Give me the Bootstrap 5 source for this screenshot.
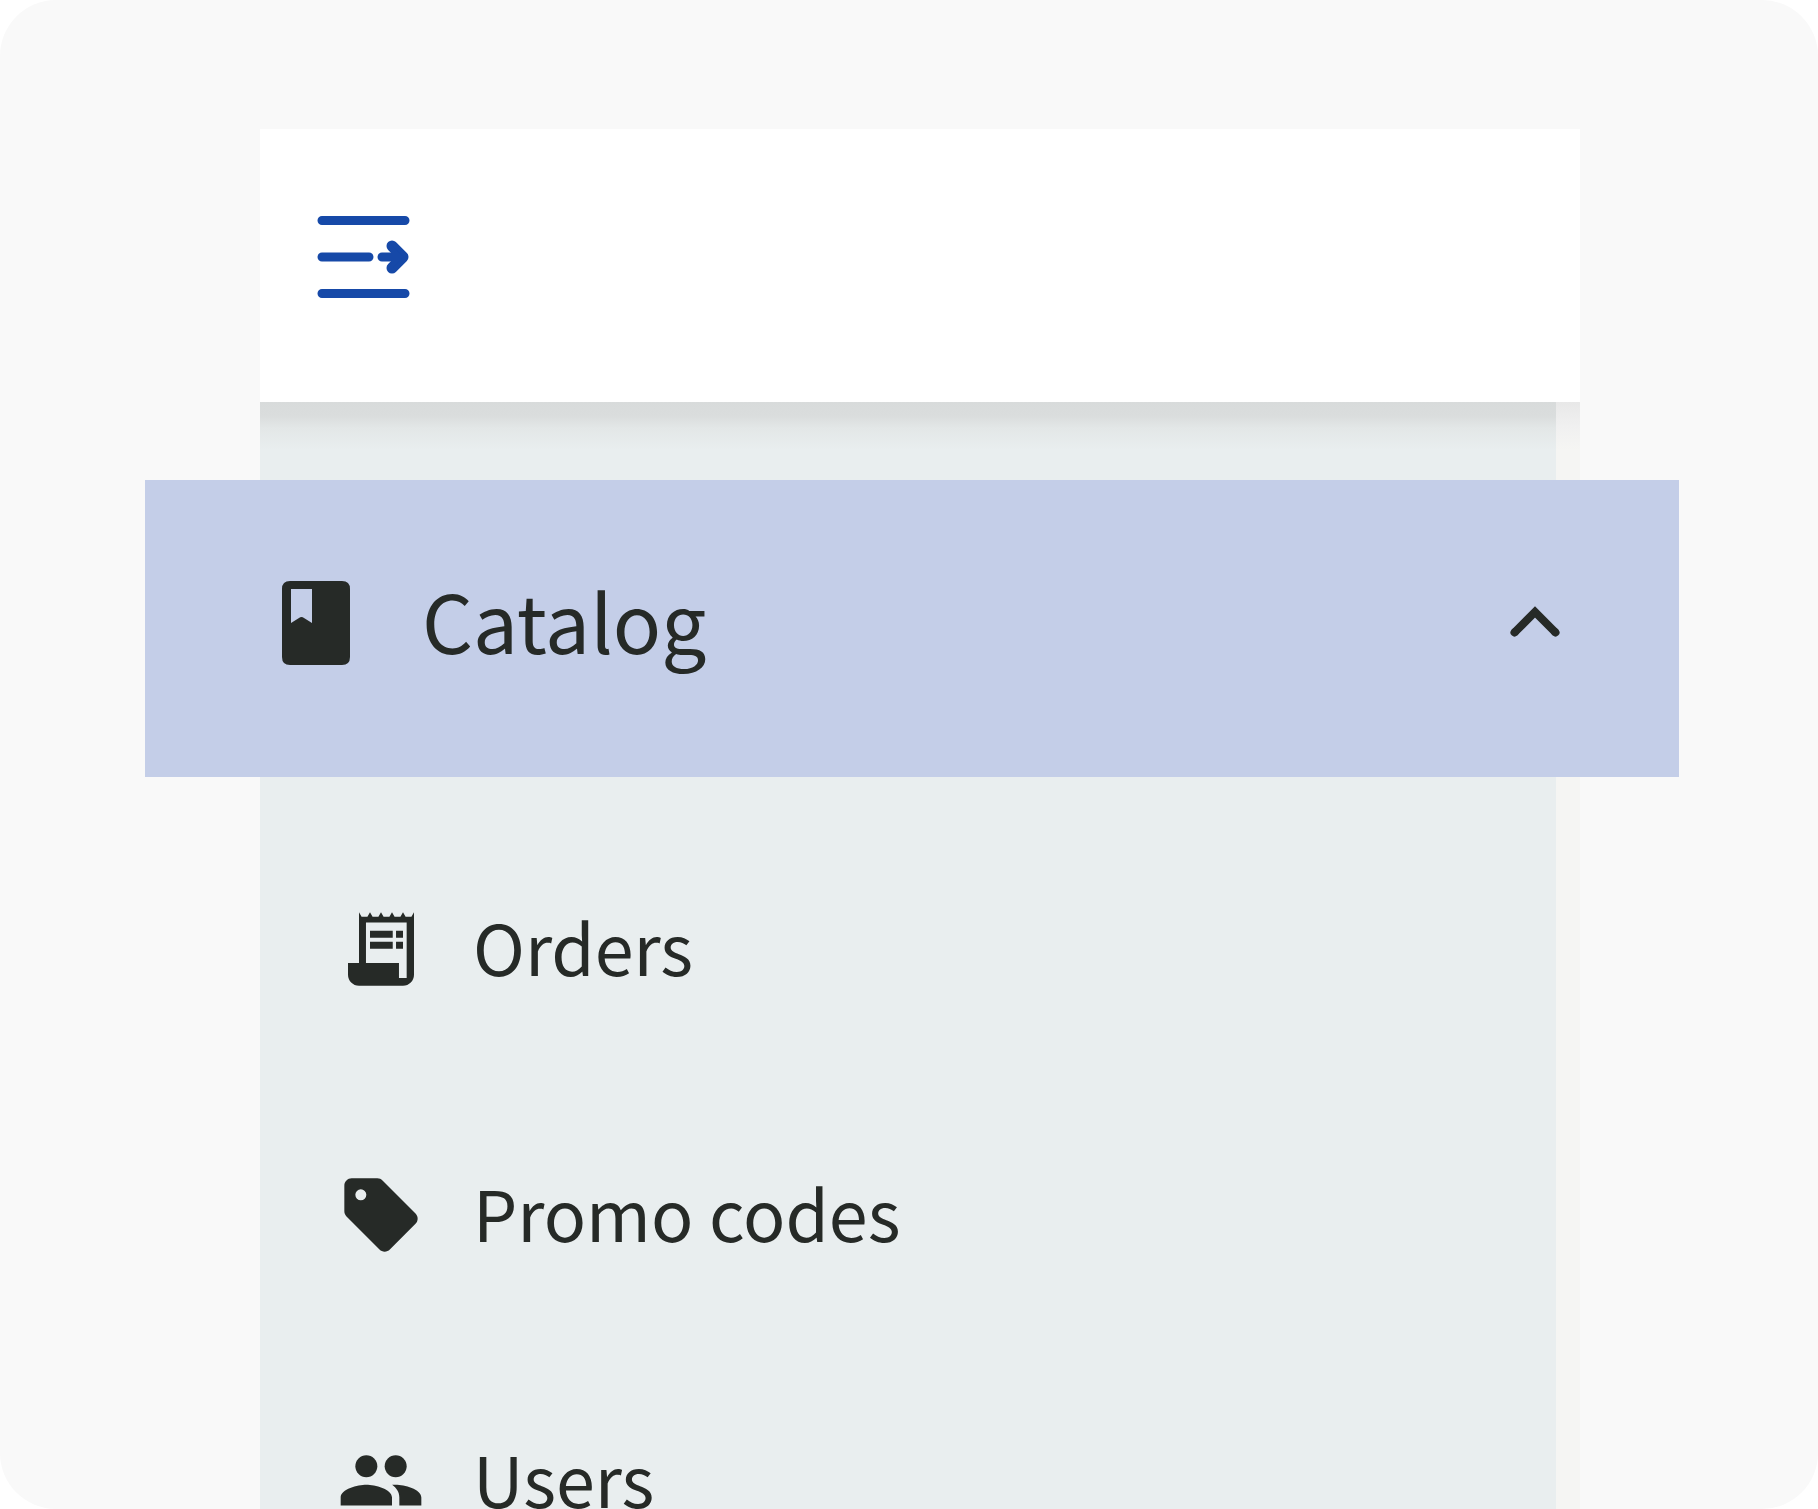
<!DOCTYPE html>
<html lang="en">
<head>
<meta charset="utf-8">
<meta name="viewport" content="width=device-width, initial-scale=1">
<title>Catalog navigation</title>
<link href="https://cdn.jsdelivr.net/npm/bootstrap@5.3.0/dist/css/bootstrap.min.css" rel="stylesheet">
<style>
body { background: #fff; font-family: "Noto Sans CJK SC", "Noto Sans", sans-serif; color: #262a27; }
.stage { background: #f9f9f9; border-radius: 56px; padding: 129px 13.1% 0 14.3%; }
.side-panel { background: #f5f5f3; min-height: 100%; }
.panel-top { height: 273px; padding: 0 51px 17px; }
.toggle-btn { color: #1649a8; width: 104px; height: 104px; }
.panel-body { background: linear-gradient(#d8dbdb 0, #dadddd 14px, #e3e7e7 26px, #e9eeef 48px); margin-right: 24px; padding-top: 78px; min-height: 1107px; }
.panel-shell { background: linear-gradient(#e8e8e8 0, #f0f0f0 24px, #f5f5f3 48px); }
.group-btn { background: #c4cee8; height: 297px; margin: 0 -123px 0 -115px; padding: 0 119px 11px 121px; font-size: 80px; line-height: 100px; color: #262a27; border: 0; }
.group-icon { width: 100px; height: 100px; margin-right: 56px; }
.group-label { padding-bottom: 8px; }
.chevron-icon { width: 50px; height: 34px; }
.sub-list { padding-top: 39px; }
.sub-link { height: 266px; padding: 0 0 0 77px; gap: 48px; font-size: 70px; line-height: 100px; color: #262a27; }
.sub-icon { width: 88px; height: 88px; }
.sub-label { padding-bottom: 6px; }
</style>
</head>
<body>
<main class="stage vh-100 overflow-hidden">
  <aside class="side-panel">
    <header class="panel-top bg-white d-flex align-items-center">
      <button type="button" class="toggle-btn btn p-0 border-0" aria-label="Expand menu">
        <svg width="104" height="104" viewBox="0 0 104 104" fill="none" stroke="currentColor" stroke-width="9" stroke-linecap="round" stroke-linejoin="round" aria-hidden="true">
          <path d="M11 15.500H94M11 52H58M11 88.500H94M71 52H90"/>
          <path d="M81 41L92 52L81 63" stroke-width="11"/>
          <path d="M80 40L93 52L80 64Z" fill="currentColor" stroke="none"/>
        </svg>
      </button>
    </header>
    <div class="panel-shell">
      <nav class="panel-body d-flex flex-column" aria-label="Main">
        <button type="button" class="group-btn d-flex align-items-center text-start" data-bs-toggle="collapse" data-bs-target="#catalogItems" aria-expanded="true" aria-controls="catalogItems">
          <svg class="group-icon flex-shrink-0" viewBox="0 0 100 100" aria-hidden="true">
            <path fill="currentColor" fill-rule="evenodd" d="M24 8H76Q84 8 84 16V84Q84 92 76 92H24Q16 92 16 84V16Q16 8 24 8ZM25 16V50L33 45Q35.500 43 38 45L46 50V16Z"/>
          </svg>
          <span class="group-label flex-grow-1">Catalog</span>
          <svg class="chevron-icon flex-shrink-0" viewBox="0 0 50 34" fill="none" stroke="currentColor" stroke-width="8" aria-hidden="true"><path d="M4 27L25 6L46 27"/><path d="M4.500 26.500L5 26M45.500 26.500L45 26" stroke-linecap="round"/></svg>
        </button>
        <ul id="catalogItems" class="sub-list collapse show list-unstyled mb-0">
          <li><a href="#orders" class="sub-link d-flex align-items-center text-decoration-none">
            <svg class="sub-icon flex-shrink-0" viewBox="0 0 24 24" fill="currentColor" aria-hidden="true">
              <path fill-rule="evenodd" d="M6 2L6.700 3.200H8.300L9 2L9.700 3.200H11.300L12 2L12.700 3.200H14.300L15 2L15.700 3.200H17.300L18 2L18.700 3.200H20.300L21 2V19C21 20.660 19.660 22 18 22H6C4.340 22 3 20.660 3 19V15.800H6ZM7.900 4.800V15.800H16.900V19.900H19V4.800Z"/>
              <path d="M9 7H15.200V8.900H9ZM16.100 7H18V8.900H16.100ZM9 10H15.200V11.900H9ZM16.100 10H18V11.900H16.100Z"/>
            </svg>
            <span class="sub-label">Orders</span></a></li>
          <li><a href="#promo-codes" class="sub-link d-flex align-items-center text-decoration-none">
            <svg class="sub-icon flex-shrink-0" viewBox="0 0 24 24" fill="currentColor" aria-hidden="true">
              <path fill-rule="evenodd" d="M21.410 11.580L12.410 2.580C12.050 2.220 11.550 2 11 2H4C2.900 2 2 2.900 2 4V11C2 11.550 2.220 12.050 2.590 12.420L11.590 21.420C12.300 22.180 13.700 22.180 14.410 21.410L21.410 14.410C22.200 13.600 22.200 12.400 21.410 11.580ZM6.500 5A1.500 1.500 0 1 1 6.500 8A1.500 1.500 0 1 1 6.500 5Z"/>
            </svg>
            <span class="sub-label">Promo codes</span></a></li>
          <li><a href="#users" class="sub-link d-flex align-items-center text-decoration-none">
            <svg class="sub-icon flex-shrink-0" viewBox="0 0 24 24" fill="currentColor" aria-hidden="true">
              <circle cx="8" cy="8" r="3"/><circle cx="16" cy="8" r="3"/>
              <path d="M8 13C5.670 13 1 14.170 1 16.500V18.700H15V16.500C15 14.170 10.330 13 8 13ZM16 13C15.710 13 15.380 13.020 15.030 13.050C16.190 13.890 17 15.020 17 16.500V18.700H23V16.500C23 14.170 18.330 13 16 13Z"/>
            </svg>
            <span class="sub-label">Users</span></a></li>
        </ul>
      </nav>
    </div>
  </aside>
</main>
<script src="https://cdn.jsdelivr.net/npm/bootstrap@5.3.0/dist/js/bootstrap.bundle.min.js"></script>
</body>
</html>
